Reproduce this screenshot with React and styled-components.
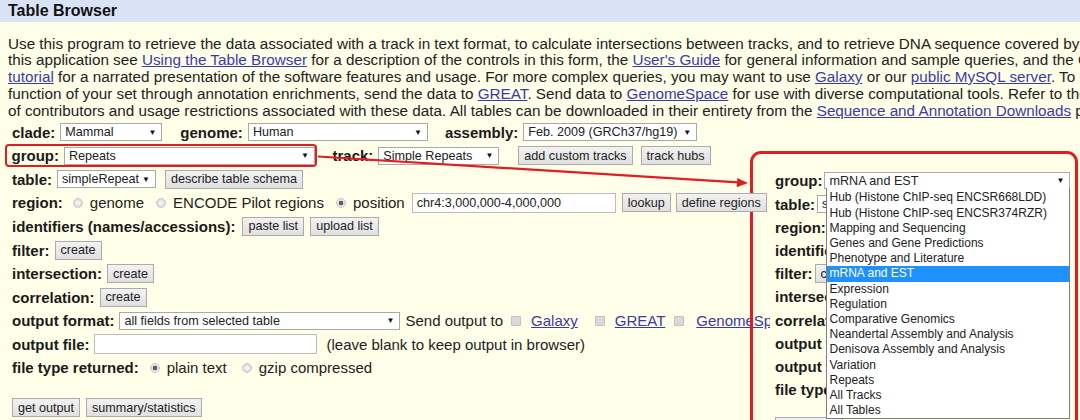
import styled, { createGlobalStyle } from "styled-components";

const GlobalStyle = createGlobalStyle`
  html, body { margin: 0; padding: 0; background: #fffee8; }
  body { font-family: "Liberation Sans", Arial, sans-serif; color: #1d1d1d; }
  * { box-sizing: border-box; }
`;

const Page = styled.div`
  position: relative;
  width: 1080px;
  height: 420px;
  overflow: hidden;
  background: #fffee8;
`;

const Header = styled.div`
  height: 22px;
  background: #dae2f5;
  font-weight: bold;
  font-size: 16px;
  line-height: 22px;
  padding-left: 8px;
  color: #111;
`;

const Intro = styled.div`
  padding: 13.5px 0 0 8px;
  font-size: 15.25px;
  line-height: 16.75px;
  white-space: nowrap;
  overflow: hidden;
  color: #222;
`;

const Link = styled.a`
  color: #3b3ba8;
  text-decoration: underline;
  cursor: pointer;
`;

const Form = styled.div`
  padding: 1px 0 0 12px;
`;

const Row = styled.div`
  display: flex;
  align-items: center;
  gap: 5px;
  height: ${(p) => p.$h || 23.6}px;
  margin-top: ${(p) => p.$mt || 0}px;
  white-space: nowrap;
`;

const Label = styled.span`
  font-weight: bold;
  font-size: 15px;
  color: #1a1a1a;
  margin-left: ${(p) => p.$ml || 0}px;
`;

const Text = styled.span`
  font-size: 15px;
  color: #222;
  margin-left: ${(p) => p.$ml || 0}px;
`;

const Select = styled.span`
  display: inline-flex;
  align-items: center;
  justify-content: space-between;
  flex: none;
  position: relative;
  width: ${(p) => p.$w}px;
  height: ${(p) => p.$h || 18}px;
  margin-left: ${(p) => p.$ml || 0}px;
  padding: 0 5px 0 4px;
  background: #fff;
  border: 1px solid #a9a9a9;
  font-size: 12.6px;
  color: #222;

  &::after {
    content: "▼";
    font-size: 8px;
    color: #111;
  }
`;

const Button = styled.span`
  display: inline-flex;
  align-items: center;
  flex: none;
  height: 19px;
  padding: 0 5px;
  margin-left: ${(p) => p.$ml || 0}px;
  border: 1px solid #ababab;
  background: linear-gradient(#f2f2f2, #e0e0e0);
  font-size: 12.6px;
  color: #222;
  ${(p) => p.$raised && "position: relative; z-index: 3;"}
`;

const TextInput = styled.span`
  display: inline-flex;
  align-items: center;
  flex: none;
  width: ${(p) => p.$w}px;
  height: 20px;
  margin-left: ${(p) => p.$ml || 0}px;
  padding: 0 4px;
  background: #fff;
  border: 1px solid #bcbcbc;
  font-size: 12.6px;
  color: #222;
`;

const Radio = styled.span`
  flex: none;
  width: 10px;
  height: 10px;
  border-radius: 50%;
  margin: 0 2px 0 ${(p) => p.$ml || 0}px;
  border: 1px solid #c9c9c9;
  background: ${(p) =>
    p.$on
      ? "radial-gradient(circle, #5a5a5a 0 2px, #e4e4e4 2.6px)"
      : "radial-gradient(circle, #f2f2f2 0 2px, #dcdcdc 3px)"};
`;

const Checkbox = styled.span`
  flex: none;
  width: 10px;
  height: 10px;
  border-radius: 1px;
  margin: 0 5px 0 ${(p) => p.$ml || 0}px;
  border: 1px solid #c2c2c2;
  background: #d9d9d9;
`;

const Highlight = styled.span`
  display: inline-flex;
  align-items: center;
  gap: 5px;
  height: 23px;
  margin-left: -7px;
  padding: 0 0.5px 0 4.5px;
  border: 2.5px solid #e11d22;
  border-radius: 4px;
`;

/* zoomed copy of the form pasted over the page; its left strip lets the page show through */
const Callout = styled.div`
  position: absolute;
  left: 750px;
  top: 151px;
  width: 328px;
  height: 290px;
  padding: 15.4px 0 0 22px;
  border: 3px solid #e11d22;
  border-radius: 11px;
  background: linear-gradient(to right, transparent 17px, #fffee8 17px);
  overflow: hidden;
  z-index: 2;
`;

const CalloutRow = styled.div`
  display: flex;
  align-items: center;
  gap: 2px;
  height: 23.2px;
  margin-top: ${(p) => p.$mt || 0}px;
  white-space: nowrap;
`;

const Dropdown = styled.div`
  position: absolute;
  left: 1px;
  top: 100%;
  width: 244px;
  padding-top: 2px;
  background: #fff;
  border: 1px solid #7f7f7f;
  border-top: none;
  z-index: 4;
`;

const Option = styled.div`
  height: 15.2px;
  line-height: 15.2px;
  padding-left: 2px;
  font-size: 12px;
  color: ${(p) => (p.$active ? "#fff" : "#222")};
  background: ${(p) => (p.$active ? "#1e90ff" : "transparent")};
`;

const Overlay = styled.svg`
  position: absolute;
  left: 0;
  top: 0;
  pointer-events: none;
  z-index: 5;
`;

const groups = [
  "Hub (Histone ChIP-seq ENCSR668LDD)",
  "Hub (Histone ChIP-seq ENCSR374RZR)",
  "Mapping and Sequencing",
  "Genes and Gene Predictions",
  "Phenotype and Literature",
  "mRNA and EST",
  "Expression",
  "Regulation",
  "Comparative Genomics",
  "Neandertal Assembly and Analysis",
  "Denisova Assembly and Analysis",
  "Variation",
  "Repeats",
  "All Tracks",
  "All Tables",
];

export default function App() {
  return (
    <Page>
      <GlobalStyle />
      <Header>Table Browser</Header>

      <Intro>
        <div>
          Use this program to retrieve the data associated with a track in text format, to calculate
          intersections between tracks, and to retrieve DNA sequence covered by a track. For help in using
        </div>
        <div>
          this application see <Link>Using the Table Browser</Link> for a description of the controls in
          this form, the <Link>User's Guide</Link> for general information and sample queries, and the
          OpenHelix Table Browser
        </div>
        <div>
          <Link>tutorial</Link> for a narrated presentation of the software features and usage. For more
          complex queries, you may want to use <Link>Galaxy</Link> or our <Link>public MySQL server</Link>.
          To examine the biological
        </div>
        <div>
          function of your set through annotation enrichments, send the data to <Link>GREAT</Link>. Send
          data to <Link>GenomeSpace</Link> for use with diverse computational tools. Refer to the Credits
        </div>
        <div>
          of contributors and usage restrictions associated with these data. All tables can be downloaded
          in their entirety from the <Link>Sequence and Annotation Downloads</Link> page.
        </div>
      </Intro>

      <Form>
        <Row>
          <Label>clade:</Label>
          <Select $w={102}>Mammal</Select>
          <Label $ml={13}>genome:</Label>
          <Select $w={180}>Human</Select>
          <Label $ml={12}>assembly:</Label>
          <Select $w={174}>Feb. 2009 (GRCh37/hg19)</Select>
        </Row>
        <Row>
          <Highlight>
            <Label>group:</Label>
            <Select $w={251}>Repeats</Select>
          </Highlight>
          <Label $ml={10}>track:</Label>
          <Select $w={121}>Simple Repeats</Select>
          <Button $ml={14}>add custom tracks</Button>
          <Button $ml={3}>track hubs</Button>
        </Row>
        <Row>
          <Label>table:</Label>
          <Select $w={99}>simpleRepeat</Select>
          <Button $ml={4}>describe table schema</Button>
        </Row>
        <Row>
          <Label>region:</Label>
          <Radio $ml={5} />
          <Text>genome</Text>
          <Radio $ml={7} />
          <Text>ENCODE Pilot regions</Text>
          <Radio $ml={7} $on />
          <Text>position</Text>
          <TextInput $w={204} $ml={2}>chr4:3,000,000-4,000,000</TextInput>
          <Button $ml={1}>lookup</Button>
          <Button $raised>define regions</Button>
        </Row>
        <Row>
          <Label>identifiers (names/accessions):</Label>
          <Button $ml={2}>paste list</Button>
          <Button $ml={1}>upload list</Button>
        </Row>
        <Row>
          <Label>filter:</Label>
          <Button>create</Button>
        </Row>
        <Row>
          <Label>intersection:</Label>
          <Button>create</Button>
        </Row>
        <Row>
          <Label>correlation:</Label>
          <Button>create</Button>
        </Row>
        <Row>
          <Label>output format:</Label>
          <Select $w={281}>all fields from selected table</Select>
          <Text>Send output to</Text>
          <Checkbox $ml={3} />
          <Text>
            <Link>Galaxy</Link>
          </Text>
          <Checkbox $ml={12} />
          <Text>
            <Link>GREAT</Link>
          </Text>
          <Checkbox $ml={4} />
          <Text $ml={2}>
            <Link>GenomeSpace</Link>
          </Text>
        </Row>
        <Row>
          <Label>output file:</Label>
          <TextInput $w={223} />
          <Text $ml={4}>(leave blank to keep output in browser)</Text>
        </Row>
        <Row>
          <Label>file type returned:</Label>
          <Radio $ml={6} $on />
          <Text>plain text</Text>
          <Radio $ml={10} />
          <Text>gzip compressed</Text>
        </Row>
        <Row $mt={16.4}>
          <Button>get output</Button>
          <Button $ml={1}>summary/statistics</Button>
        </Row>
      </Form>

      <Callout>
        <CalloutRow>
          <Label>group:</Label>
          <Select $w={246} $h={17}>
            mRNA and EST
            <Dropdown>
              {groups.map((g) => (
                <Option key={g} $active={g === "mRNA and EST"}>
                  {g}
                </Option>
              ))}
            </Dropdown>
          </Select>
        </CalloutRow>
        <CalloutRow>
          <Label>table:</Label>
          <Select $w={100}>simpleRepeat</Select>
        </CalloutRow>
        <CalloutRow>
          <Label>region:</Label>
        </CalloutRow>
        <CalloutRow>
          <Label>identifiers (names/accessions):</Label>
        </CalloutRow>
        <CalloutRow>
          <Label>filter:</Label>
          <Button>create</Button>
        </CalloutRow>
        <CalloutRow>
          <Label>intersection:</Label>
        </CalloutRow>
        <CalloutRow>
          <Label>correlation:</Label>
        </CalloutRow>
        <CalloutRow>
          <Label>output format:</Label>
        </CalloutRow>
        <CalloutRow>
          <Label>output file:</Label>
        </CalloutRow>
        <CalloutRow>
          <Label>file type returned:</Label>
        </CalloutRow>
        <CalloutRow $mt={14}>
          <Button>get output</Button>
        </CalloutRow>
      </Callout>

      <Overlay width="1080" height="420" viewBox="0 0 1080 420">
        <line x1="318" y1="156.5" x2="738" y2="182.4" stroke="#e11d22" strokeWidth="2.2" />
        <polygon points="748,183 736.7,187.3 737.3,177.9" fill="#e11d22" />
      </Overlay>
    </Page>
  );
}
